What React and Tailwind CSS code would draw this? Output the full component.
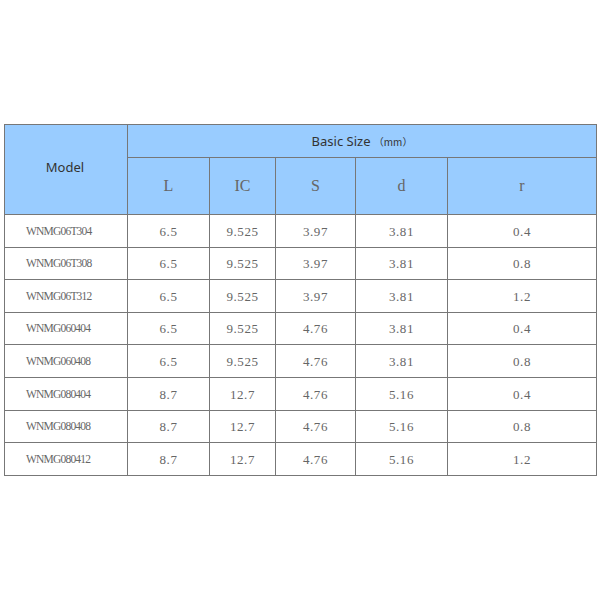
const rows = [
  ['WNMG06T304', '6.5', '9.525', '3.97', '3.81', '0.4'],
  ['WNMG06T308', '6.5', '9.525', '3.97', '3.81', '0.8'],
  ['WNMG06T312', '6.5', '9.525', '3.97', '3.81', '1.2'],
  ['WNMG060404', '6.5', '9.525', '4.76', '3.81', '0.4'],
  ['WNMG060408', '6.5', '9.525', '4.76', '3.81', '0.8'],
  ['WNMG080404', '8.7', '12.7', '4.76', '5.16', '0.4'],
  ['WNMG080408', '8.7', '12.7', '4.76', '5.16', '0.8'],
  ['WNMG080412', '8.7', '12.7', '4.76', '5.16', '1.2'],
]

const serif = "font-['Liberation_Serif','Noto_Sans_CJK_SC',serif]"
const sans = "font-['Noto_Sans','Noto_Sans_CJK_SC',sans-serif]"

export default function App() {
  return (
    <div className="w-[600px] h-[600px] bg-white pt-[124px] pl-[4px]">
      <table className="border-collapse table-fixed w-[592px] border border-[#777]">
        <colgroup>
          <col className="w-[123px]" />
          <col className="w-[82px]" />
          <col className="w-[66px]" />
          <col className="w-[80px]" />
          <col className="w-[92px]" />
          <col className="w-[149px]" />
        </colgroup>
        <thead>
          <tr className="h-[33px] bg-[#99ccff]">
            <th rowSpan={2} className={`border border-[#777] font-normal text-[13px] text-[#333] ${sans} pb-[4px] pr-[2px]`}>
              Model
            </th>
            <th colSpan={5} className={`border border-[#777] font-normal text-[13px] text-[#333] ${sans} pt-[2px]`}>
              Basic Size <span className="text-[10px] font-['Noto_Sans_CJK_SC',sans-serif]">（mm）</span>
            </th>
          </tr>
          <tr className="h-[57px] bg-[#99ccff]">
            {['L', 'IC', 'S', 'd', 'r'].map(h => (
              <th key={h} className={`border border-[#777] font-normal text-[16px] text-[#666] ${serif}`}>
                {h}
              </th>
            ))}
          </tr>
        </thead>
        <tbody>
          {rows.map(r => (
            <tr key={r[0]} className="h-[32.6px]">
              {r.map((c, i) => (
                <td
                  key={i}
                  className={`border border-[#777] text-[#666] pt-[1px] ${serif} ${i === 0 ? 'text-left pl-[21px] text-[11.5px] tracking-[-0.8px]' : 'text-center text-[13px] tracking-[0.6px]'}`}
                >
                  {c}
                </td>
              ))}
            </tr>
          ))}
        </tbody>
      </table>
    </div>
  )
}
